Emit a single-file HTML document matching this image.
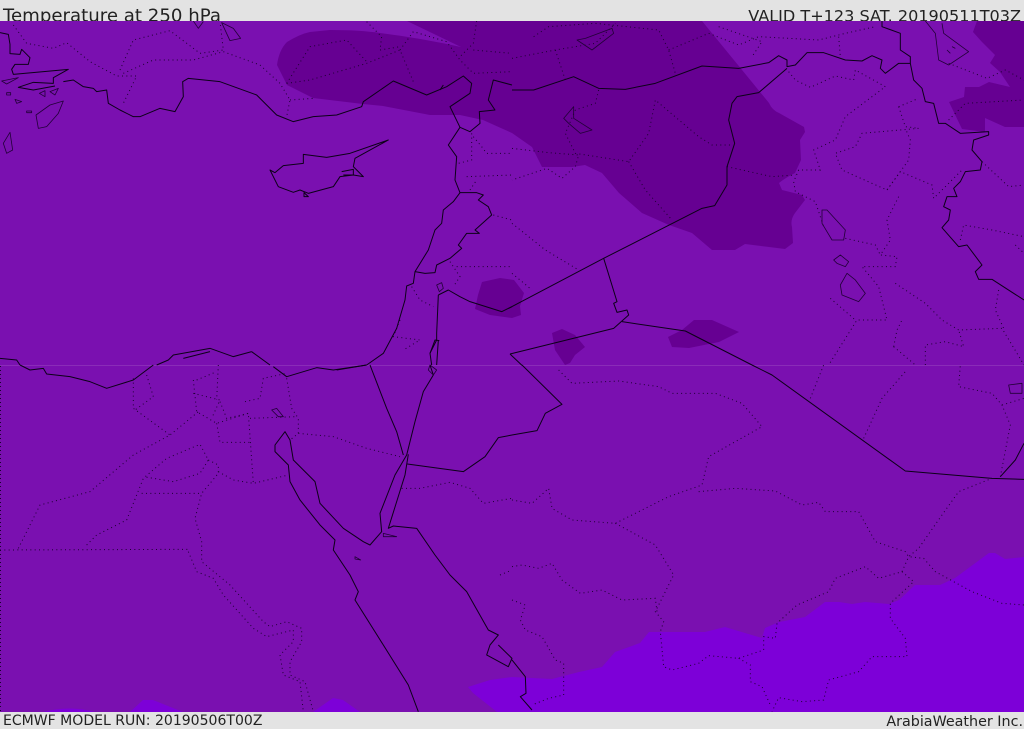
<!DOCTYPE html>
<html><head><meta charset="utf-8"><title>Temperature at 250 hPa</title>
<style>
html,body{margin:0;padding:0;background:#e3e3e3;overflow:hidden}
svg{display:block}
text{font-family:"DejaVu Sans","Liberation Sans",sans-serif;fill:#222}
.s{fill:none;stroke:#0c0018;stroke-width:3;stroke-linejoin:round}
.t{fill:none;stroke:#220038;stroke-width:2.4;stroke-linejoin:round}
.d{fill:none;stroke:#1c0030;stroke-width:3;stroke-dasharray:3 10}
</style></head><body>
<svg width="1024" height="729" viewBox="0 0 1024 729" xmlns="http://www.w3.org/2000/svg">
<defs><clipPath id="m"><rect x="0" y="21" width="1024" height="691"/></clipPath></defs>
<rect width="1024" height="729" fill="#e3e3e3"/>
<text x="3" y="21.5" font-size="18.17">Temperature at 250 hPa</text>
<text x="1021" y="21.5" font-size="16.08" text-anchor="end">VALID T+123 SAT. 20190511T03Z</text>
<text x="3" y="725" font-size="14.04">ECMWF MODEL RUN: 20190506T00Z</text>
<text x="1023" y="726" font-size="14.3" text-anchor="end">ArabiaWeather Inc.</text>
<g clip-path="url(#m)">
<rect y="21" width="1024" height="691" fill="#7a10b0"/>
<path fill="#660092" d="M277 65Q279 50 287 42Q300 34 310 32L330 30Q360 30 380 33Q420 38 461 47L407 21H702L769 103Q772 110 779 113L804 127L805 132L800 140L801 160L795 173Q785 178 779 183L782 190L802 195L805 200L795 213Q790 220 792 227L793 243L785 249L745 244L735 250H712L692 233L669 225L642 213L619 193L602 173L585 165L572 167H542L532 147L512 133L483 120L460 115H430L383 106L363 104L313 98L287 85Z"/>
<path fill="#660092" d="M977 21L973 32L982 42L995 55L990 63L1000 72L1010 87L989 82L979 87H965L964 97L949 102L962 129L985 132L985 118L1005 127H1024V21Z"/>
<path fill="#660092" d="M482 282L500 278L514 280L524 293L520 306L521 315L512 318L490 315L475 309L478 295ZM552 333L562 329L575 335L585 347L575 355L570 363L565 365L555 350ZM668 337L682 330L694 320H712L739 332L719 342L689 348L672 347Z"/>
<path fill="#7d00d8" d="M497 712L473 693L468 687L490 680L512 677L552 679L579 672L602 667L615 652L640 643L649 632H705L725 627L745 633L762 638L765 628L779 622L805 617L825 602H839L852 604L865 602L889 604L899 600L915 585H940L955 578L989 553H995L1005 559L1024 557V712ZM130 712L143 700H153L183 712ZM313 712L333 698L343 700L360 712ZM43 712Q70 705 95 712Z"/>
<rect y="365" width="1024" height="1" fill="#8a2cb8"/>
<path d="M0.5 366V712" stroke="#1c0030" stroke-width="1" stroke-dasharray="1 3" fill="none"/>

<!-- NW quadrant -->
<g transform="scale(.33333)">
<path class="d" d="M40 75L80 130L160 145L200 128L270 185L350 228H410L370 310M360 210L400 120L510 92L600 160L670 150L660 65M370 220L460 180H580L670 155L780 195L840 250L870 300L860 350M870 300L940 295M860 250L930 140L1040 120L1100 185M860 250L930 240L1100 190L1200 150L1240 245M1100 65L1145 110L1140 150L1200 140M1200 150L1240 95L1340 125L1380 180L1420 220L1536 215M1430 63L1420 130L1380 170M1420 150L1536 160M1415 400V480L1375 490M1420 410L1445 440L1460 460H1536M1400 530L1536 525M1410 570L1430 540M1480 645L1536 660M1350 785L1380 830L1360 860M1370 800H1536M1235 860L1260 900L1300 920M1200 960L1180 1010L1260 1020L1210 1050"/>
<path class="s" d="M0 98L25 103L30 133L30 161L60 163L65 148L90 173L85 193L45 193L35 208L40 223L205 208L160 233L160 250L100 247L55 262L100 270L165 258M190 245L220 240L250 260L280 265L290 275L320 270L325 310L360 330L400 350H420L480 325L525 335L550 290L548 245L565 235L660 245L770 285L830 345L880 365L940 350L1010 345L1085 320L1090 305L1180 243L1280 285L1340 260L1390 228L1415 250L1410 280L1350 320L1380 382L1410 395L1440 370L1438 335L1485 330L1465 300L1480 240L1536 255"/>
<path class="s" d="M1380 382L1345 435L1370 470L1365 540L1380 578L1360 605L1330 630L1325 670L1305 690L1285 750L1245 815L1240 850L1220 858L1215 900L1190 985L1150 1060L1100 1095"/>
<path class="s" d="M1380 578H1430L1450 585L1435 600L1465 620L1475 645L1425 690L1438 700H1400L1375 735L1385 745L1350 775L1310 795L1305 818L1275 820L1245 815M1315 885L1345 870L1380 890L1410 905L1505 935L1536 920M1315 885L1310 1000V1020L1290 1060L1295 1095M1315 1020L1310 1095"/>
<path class="s" d="M1100 1095L1010 1110M755 1055L700 1070L630 1045L520 1065L505 1080L470 1095M755 1055L810 1095M0 1075L50 1080L60 1095M550 1075L630 1055M1330 255L1320 270"/>
<path class="s" d="M810 510L835 560L880 577L900 570L925 580L1000 560L1020 530L1060 525L1090 530L1060 500L1065 475L1165 420L1050 460L980 472L910 463V490L850 497L825 518ZM1025 515L1060 508V525L1030 525M912 578L925 590H912Z"/>
<path class="t" d="M190 303L150 315L108 345L115 385L140 380L175 340ZM30 397L10 430L20 460L38 450ZM5 243L55 233L20 252ZM20 278H32V285H20ZM45 298L65 305L50 310ZM80 333H95V338H80ZM118 280L135 272V290ZM150 275L175 265L165 285ZM665 68L700 85L722 115L690 122ZM580 63L595 85L610 65"/>
<path class="s" d="M1290 1060L1305 1020L1318 1022"/>
<path class="t" d="M1310 855L1325 848L1330 865L1318 875Z"/>
</g>

<!-- NE quadrant -->
<g transform="translate(512 0) scale(.33333)">
<path class="d" d="M65 110L110 80L250 70L440 90L470 150L490 220M0 175L130 150L250 130L310 70M130 150L160 240M470 150L590 100L680 135L740 110L920 120L1000 100L1090 80M620 80L750 125L720 170M980 110L985 170M830 215L850 240L895 262L970 228L1025 240L1030 210L1120 260L1000 350L970 420L905 450L925 510H860L845 545L850 575L910 605L935 680M260 270L250 310L190 330L160 400L190 460L350 485L410 400L430 300L560 410L600 435H660M0 445L110 458L200 465L190 500L150 535L105 505L0 540M350 485L400 570L480 660M645 500L780 530L850 525M1160 320L1220 295M1160 320L1180 380L1220 385L1050 400L1030 440L970 460L990 510L1125 570L1190 480L1195 420L1180 385M1125 570L1165 515L1260 555L1265 595L1320 540L1350 510M1160 590L1125 660L1135 720L1105 765L1155 770L1150 800H1050L1100 860L1125 960H1035L950 1095M1000 715L1090 735L1105 765M1150 850L1240 910L1290 960L1340 990L1470 985L1536 1095M1310 190L1425 235L1480 210L1536 240M1310 360L1360 310L1536 300M1410 485L1490 560L1536 555M1345 720L1355 675L1440 690L1536 710M1510 735L1536 760M1460 870L1450 930L1475 985M955 895L1030 960M1145 1040L1155 990L1170 960M1145 1040L1210 1095M1240 1095V1035L1300 1025L1355 1040L1340 990M0 670L100 750L200 810M0 820L60 870"/>
<path class="s" d="M0 270H65L185 230L260 265L340 268L430 250L570 198L680 205L770 188L800 167L825 180V200L850 195L885 158H935L1000 180L1050 183L1080 167L1110 180L1105 205L1120 220L1160 190H1195L1205 240L1230 265L1240 305L1265 310L1280 370H1300L1345 400L1430 395V405L1385 420L1380 450L1410 485L1405 510L1360 515L1345 545L1325 565L1335 590H1305L1295 620L1315 630L1310 660L1290 683L1340 740L1365 735L1410 795L1390 815L1400 838H1440L1536 900M1110 63V80L1165 100V150L1195 170V190"/>
<path class="s" d="M-10 925L275 775L570 625L608 617L645 555V500L668 430L650 360L660 310L675 290L740 278L825 205M275 775L315 905L305 910L315 937L345 930L350 945L305 985L-6 1062M-6 1062L30 1096M330 965L520 993L720 1095"/>
<path class="t" d="M930 630L945 630L1000 690L995 720H960L930 670ZM965 780L985 765L1010 785L1000 800L975 790ZM1005 820L985 855L990 885L1040 905L1060 880L1030 840ZM155 355L185 320V355L240 390L205 400L170 370ZM195 120L220 115L300 85L305 100L240 150ZM1240 63L1270 100L1280 180L1310 195L1370 155L1295 100L1290 70M1305 150L1315 160M1320 140L1330 145"/>
</g>

<!-- SW quadrant -->
<g transform="translate(0 365) scale(.33333)">
<path class="d" d="M0 555L570 553M55 550L120 420L270 380L400 270L510 210L595 140M400 40V130L510 210M440 30L460 95L405 135M580 45L590 140L650 175L745 145L760 355M650 175L660 232H755M580 85L660 105L635 160M660 110L680 160L745 145M655 0L650 105M590 45L650 20M860 40L875 130L895 160V205L870 225M750 160L890 155M895 205L1000 215L1100 250L1200 275M735 110L780 100L790 40L860 25M260 540L290 510L380 465L430 340L500 280L600 238L625 285L600 325L520 350L430 335M425 385H600M625 285L655 300V325L605 385L585 460L605 530V590L690 660L790 770L810 785L860 770L905 790V830L870 890V930L915 950L940 1040M565 560L590 620L640 640L670 690L760 790L800 815L880 795V830L840 870L850 930L900 950L910 1040M655 320L700 345L760 355L865 330M1205 370H1260L1350 352L1410 370L1450 415L1536 400M1500 630L1536 615"/>
<path class="s" d="M1100 0L1000 15L950 8L860 35L820 5M460 0L400 45L320 70L270 50L210 35L140 27L130 10L90 15L60 0M1110 0L1160 130L1190 200L1210 270M1290 0L1300 30L1270 80L1245 170L1220 270L1185 330L1140 445L1145 500L1110 540L1090 530L1030 490L960 415L945 350L880 285L870 225L855 200L825 240V260L865 300L870 350L900 405L960 480L1005 525L1000 555L1050 630L1075 680L1065 705L1150 840L1225 960L1255 1040M1225 268L1215 330L1165 490L1180 483L1250 490L1305 570L1350 630L1400 680L1465 795L1495 810L1470 840L1460 870L1525 905L1536 880L1495 840M1222 297L1390 320L1455 275L1495 218L1536 210"/>
<path class="t" d="M815 135L830 130L850 155L835 155ZM1150 505L1190 515L1150 515ZM1065 575L1082 585L1065 582ZM1290 0L1310 15L1300 30L1285 15Z"/>
</g>

<!-- SE quadrant -->
<g transform="translate(512 365) scale(.33333)">
<path class="d" d="M140 15L180 55L320 48L440 65L480 85H610L690 115L750 185L590 275L570 360L470 395L310 475L180 465L120 430L110 370L60 415L0 405M560 380L670 370L790 378L870 420L920 412L940 440H1040L1090 530L1180 560L1190 575L1235 580L1270 620L1380 680L1470 715L1536 720M310 475L430 540L485 630L430 740L455 770L445 800L455 905L480 915L560 895L590 872L680 880L755 855V815L790 820L795 775L855 720L950 680L970 640L1060 605L1100 640L1170 620L1205 650L1135 715V760L1180 820L1185 875H1080L1040 920L950 945L935 1005L870 1010L800 998L780 1040M680 880L715 900V950L750 965L775 1020M0 605L30 600L80 610L120 595L150 645L205 685L270 675L330 705L430 700L435 740M0 705L40 720L25 765L40 795L90 815L130 885L155 895V990L110 1000L60 1020M1170 620L1190 575L1220 550L1290 450L1340 380L1440 340M1465 335L1495 180L1470 120L1440 85L1340 65L1345 0M1470 120L1536 100M895 100L935 0M1055 220L1110 100L1180 20"/>
<path class="s" d="M0 210L75 197L100 145L150 118L30 0M720 0L780 30L1180 318L1440 340L1536 343M1465 335L1510 285L1536 235M0 885L40 935L42 985L25 995L60 1035"/>
<path class="t" d="M1490 60L1530 55V85L1495 85Z"/>
</g>
</g>
</svg>
</body></html>
